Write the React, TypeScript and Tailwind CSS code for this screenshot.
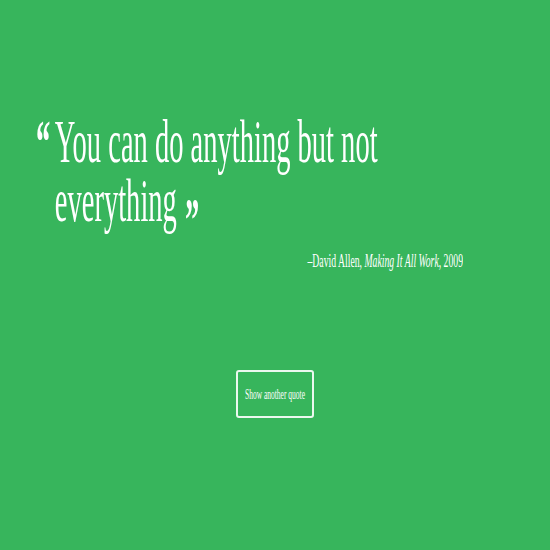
export default function App() {
  return (
    <div className="min-h-screen w-full bg-[#37b55c] text-white font-['Liberation_Serif',serif]">
      <div className="w-[463px] pt-[112px]">
        <blockquote className="ml-[36px] origin-left scale-x-[0.46] whitespace-nowrap pl-[41px] -indent-[41px] text-[62px] leading-[59px]">
          <span className="mr-[10px] font-bold">“</span>
          You can do anything but not
          <br />
          everything
          <span className="relative top-[19px] ml-[18px] font-bold">”</span>
        </blockquote>
        <p className="mt-[19px] origin-right scale-x-[0.54] whitespace-nowrap text-right text-[18px] leading-6">
          –David Allen, <em>Making It All Work</em>, 2009
        </p>
      </div>
      <div className="mt-[97px] flex justify-center">
        <button
          type="button"
          className="flex h-[48px] w-[78px] items-center justify-center rounded-[3px] border-2 border-white/90"
        >
          <span className="scale-x-[0.5] whitespace-nowrap text-[15px] leading-none">
            Show another quote
          </span>
        </button>
      </div>
    </div>
  );
}
